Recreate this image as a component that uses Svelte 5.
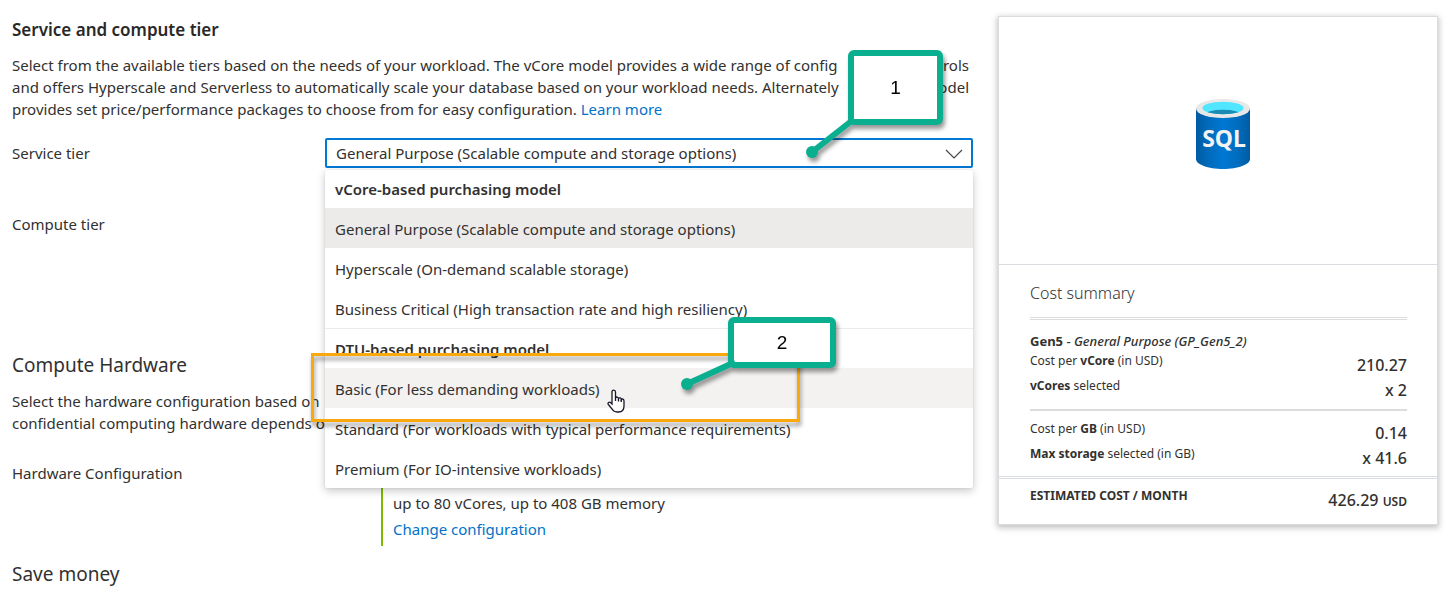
<script>
  const groups = [
    {
      label: "vCore-based purchasing model",
      options: [
        { value: "gp", text: "General Purpose (Scalable compute and storage options)" },
        { value: "hs", text: "Hyperscale (On-demand scalable storage)" },
        { value: "bc", text: "Business Critical (High transaction rate and high resiliency)" }
      ]
    },
    {
      label: "DTU-based purchasing model",
      options: [
        { value: "basic", text: "Basic (For less demanding workloads)" },
        { value: "standard", text: "Standard (For workloads with typical performance requirements)" },
        { value: "premium", text: "Premium (For IO-intensive workloads)" }
      ]
    }
  ];
  let tier = $state("gp");
  let hovered = $state("basic");
</script>

<div class="page">
  <main>
    <h2 class="strong">Service and compute tier</h2>
    <p class="intro">
      <span class="spread"><span>Select from the available tiers based on the needs of your workload. The vCore model provides a wide range of config</span> <span>controls</span></span>
      <span class="spread"><span>and offers Hyperscale and Serverless to automatically scale your database based on your workload needs. Alternately</span> <span>model</span></span>
      <span>provides set price/performance packages to choose from for easy configuration. <a href="#learn">Learn more</a></span>
    </p>

    <div class="row">
      <label for="tier">Service tier</label>
      <div class="field">
        <select id="tier" bind:value={tier}>
          {#each groups as g}
            {#each g.options as o}
              <option value={o.value}>{o.text}</option>
            {/each}
          {/each}
        </select>
        <svg class="chevron" viewBox="0 0 18 10" aria-hidden="true"><path d="M1 1l8 8 8-8" /></svg>

        <div class="menu">
          {#each groups as g}
            <section>
              <h3>{g.label}</h3>
              {#each g.options as o}
                <button
                  type="button"
                  class:selected={tier === o.value}
                  class:hovered={hovered === o.value}
                  onmouseenter={() => (hovered = o.value)}
                  onclick={() => (tier = o.value)}>{o.text}</button>
              {/each}
            </section>
          {/each}
        </div>

        <div class="highlight"></div>
        <svg class="pointer" viewBox="0 0 18 24" aria-hidden="true">
          <path d="M5 15V3C5 .5 8.500 .5 8.500 3V9C9 7.500 11.500 7.800 11.500 9.500C12.200 8.500 14.300 8.800 14.300 10.500C15.200 9.500 17 10 17 12V17C17 20.500 15 23 11.500 23H10C7.500 23 6.200 21.800 5 20L1.300 15.500C.3 13.800 2.300 12.500 3.500 13.500Z" />
          <path class="fingers" d="M8.500 8V12M11.500 9.500V12.500M14.300 10.500V13" />
        </svg>

        <div class="callout first">
          <svg viewBox="0 0 60 50" aria-hidden="true"><path d="M10 40L52 7" /><circle cx="10" cy="40" r="6" /></svg>
          <span>1</span>
        </div>
        <div class="callout second">
          <svg viewBox="0 0 60 50" aria-hidden="true"><path d="M10 40L58 18" /><circle cx="10" cy="40" r="6" /></svg>
          <span>2</span>
        </div>
      </div>
    </div>

    <div class="row compute">
      <span>Compute tier</span>
    </div>

    <h2>Compute Hardware</h2>
    <p class="hardware-intro">
      Select the hardware configuration based on<br />
      confidential computing hardware depends on
    </p>

    <div class="row hardware">
      <span>Hardware Configuration</span>
      <div class="config">
        <span>up to 80 vCores, up to 408 GB memory</span>
        <a href="#change">Change configuration</a>
      </div>
    </div>

    <h2 class="save">Save money</h2>
  </main>

  <aside>
    <div class="logo">
      <svg viewBox="0 0 54 70" role="img" aria-label="SQL database">
        <defs>
          <linearGradient id="body">
            <stop offset="0" stop-color="#005ba1" />
            <stop offset=".2" stop-color="#0069b8" />
            <stop offset=".5" stop-color="#0078d4" />
            <stop offset=".8" stop-color="#006bbb" />
            <stop offset="1" stop-color="#005ba1" />
          </linearGradient>
          <clipPath id="hole"><ellipse cx="27" cy="9" rx="20.500" ry="6.200" /></clipPath>
        </defs>
        <path d="M0 9V60C0 65.500 12 70 27 70S54 65.500 54 60V9Z" fill="url(#body)" />
        <ellipse cx="27" cy="9.500" rx="27" ry="9.500" fill="#e8e8e8" />
        <ellipse cx="27" cy="9" rx="20.500" ry="6.200" fill="#50e6ff" />
        <ellipse cx="27" cy="15.500" rx="18" ry="4.700" fill="#198ab3" clip-path="url(#hole)" />
        <text x="28" y="48" text-anchor="middle">SQL</text>
      </svg>
    </div>

    <div class="costs">
      <h2>Cost summary</h2>
      <div class="group">
        <p class="sku"><b>Gen5</b> - <i>General Purpose (GP_Gen5_2)</i></p>
        <div class="line"><span>Cost per <b>vCore</b> (in USD)</span><strong>210.27</strong></div>
        <div class="line"><span><b>vCores</b> selected</span><strong>x 2</strong></div>
      </div>
      <div class="group storage">
        <div class="line"><span>Cost per <b>GB</b> (in USD)</span><strong>0.14</strong></div>
        <div class="line"><span><b>Max storage</b> selected (in GB)</span><strong>x 41.6</strong></div>
      </div>
    </div>

    <div class="total line">
      <b>ESTIMATED COST / MONTH</b><strong>426.29 <small>USD</small></strong>
    </div>
  </aside>
</div>

<style>
  :global(body) {
    background: #fff;
  }
  .page {
    display: grid;
    grid-template-columns: minmax(0, 1fr) 440px;
    column-gap: 25px;
    align-items: start;
    padding: 16px 18px 0 12px;
    font: 15px/22px "Noto Sans", "Open Sans", sans-serif;
    color: #323130;
  }
  main {
    min-width: 0;
  }
  h2, h3, p {
    margin: 0;
  }
  h2 {
    font-size: 19px;
    line-height: 28px;
    font-weight: 400;
  }
  h2.strong {
    font-size: 17px;
    font-weight: 600;
    color: #292827;
  }
  a {
    color: #0072c9;
    text-decoration: none;
  }
  .intro {
    display: grid;
    margin: 10px 0 18px;
    padding-right: 4px;
    white-space: nowrap;
  }
  .spread {
    display: flex;
    justify-content: space-between;
  }
  .row {
    display: grid;
    grid-template-columns: 313px minmax(0, 1fr);
    align-items: center;
  }
  .field {
    position: relative;
  }
  select {
    display: block;
    width: 100%;
    height: 30px;
    padding: 0 36px 0 9px;
    border: 2px solid #0078d4;
    border-radius: 2px;
    outline: none;
    appearance: none;
    background: #fff;
    color: inherit;
    font: inherit;
  }
  .chevron {
    position: absolute;
    top: 11px;
    right: 10px;
    width: 18px;
    height: 10px;
    fill: none;
    stroke: #484644;
    stroke-width: 1.2;
    pointer-events: none;
  }
  .menu {
    position: absolute;
    z-index: 1;
    top: 32px;
    left: 0;
    right: 0;
    background: #fff;
    border-radius: 2px;
    box-shadow: 0 3px 8px rgba(0, 0, 0, 0.22), 0 0 2px rgba(0, 0, 0, 0.1);
  }
  .menu section + section {
    box-shadow: inset 0 1px #edebe9;
  }
  .menu h3,
  .menu button {
    display: block;
    box-sizing: border-box;
    width: 100%;
    height: 40px;
    padding: 2px 10px 0;
    border: 0;
    background: none;
    color: inherit;
    font: inherit;
    line-height: 38px;
    text-align: left;
    white-space: nowrap;
    cursor: pointer;
  }
  .menu section:first-child h3 {
    height: 38px;
    padding-top: 0;
  }
  .menu h3 {
    font-weight: 600;
  }
  .menu button.hovered {
    background: #f3f2f1;
  }
  .menu button.selected {
    background: #edebe9;
  }
  .highlight {
    position: absolute;
    z-index: 2;
    top: 215px;
    left: -14px;
    width: 483px;
    height: 63px;
    border: 3px solid #f9a90b;
    filter: drop-shadow(1px 4px 2px rgba(0, 0, 0, 0.4));
    pointer-events: none;
  }
  .pointer {
    position: absolute;
    z-index: 3;
    top: 251px;
    left: 282px;
    width: 18px;
    height: 24px;
    fill: #fff;
    stroke: #16162c;
    stroke-width: 1.3;
    pointer-events: none;
  }
  .callout {
    position: absolute;
    z-index: 4;
    filter: drop-shadow(2px 4px 2px rgba(0, 0, 0, 0.4));
    pointer-events: none;
  }
  .callout span {
    display: grid;
    place-items: center;
    box-sizing: border-box;
    width: 100%;
    height: 100%;
    border: 6px solid #0aaf90;
    border-radius: 6px;
    background: #fff;
    color: #000;
    font: 19px/22px "Liberation Sans", Arial, sans-serif;
  }
  .callout svg {
    position: absolute;
    width: 60px;
    height: 50px;
    fill: #0aaf90;
    stroke: none;
  }
  .callout path {
    stroke: #0aaf90;
    stroke-width: 6;
  }
  .first {
    top: -88px;
    right: 30px;
    width: 95px;
    height: 75px;
  }
  .first svg {
    top: 62px;
    left: -46px;
  }
  .second {
    top: 179px;
    left: 403px;
    width: 108px;
    height: 51px;
  }
  .second svg {
    top: 27px;
    left: -51px;
  }
  .compute {
    margin: 45px 0 116px;
  }
  .hardware-intro {
    margin: 11px 0 20px;
    white-space: nowrap;
  }
  .hardware {
    align-items: start;
    padding-top: 8px;
  }
  .config {
    display: grid;
    gap: 4px;
    justify-items: start;
    margin-left: 56px;
    padding: 30px 0 6px 10px;
    border-left: 2px solid #7fba00;
  }
  .save {
    margin-top: 14px;
  }
  aside {
    border: 1px solid #dadcde;
    box-sizing: border-box;
    background: #fff;
    box-shadow: 0 2px 6px 1px rgba(0, 0, 0, 0.24);
    font-size: 12px;
    line-height: 20px;
  }
  .logo {
    display: grid;
    place-items: center;
    padding: 82px 0 95px 10px;
    border-bottom: 1px solid #d9dce0;
  }
  .logo svg {
    width: 54px;
    height: 70px;
  }
  .logo text {
    font: 700 23px "Noto Sans", sans-serif;
    fill: #f2f2f2;
  }
  .costs {
    padding: 14px 30px 7px 31px;
  }
  .costs h2 {
    font-size: 16px;
    font-weight: 300;
    padding-bottom: 10px;
  }
  .group {
    padding: 12px 0 8px;
    border-top: 3px double #dadcde;
  }
  .storage {
    padding: 8px 0 0;
    border-top: 2px solid #dadcde;
  }
  .sku {
    font-size: 13px;
    line-height: 19px;
    font-weight: 500;
  }
  .line {
    display: flex;
    justify-content: space-between;
    align-items: flex-start;
    height: 25px;
  }
  .line strong {
    padding-top: 4px;
    font-size: 16px;
    font-weight: 500;
  }
  .line small {
    font-size: 12px;
    font-weight: 600;
  }
  .total {
    height: 38px;
    padding: 7px 30px 0 31px;
    border-top: 3px double #d9dce0;
  }
</style>
